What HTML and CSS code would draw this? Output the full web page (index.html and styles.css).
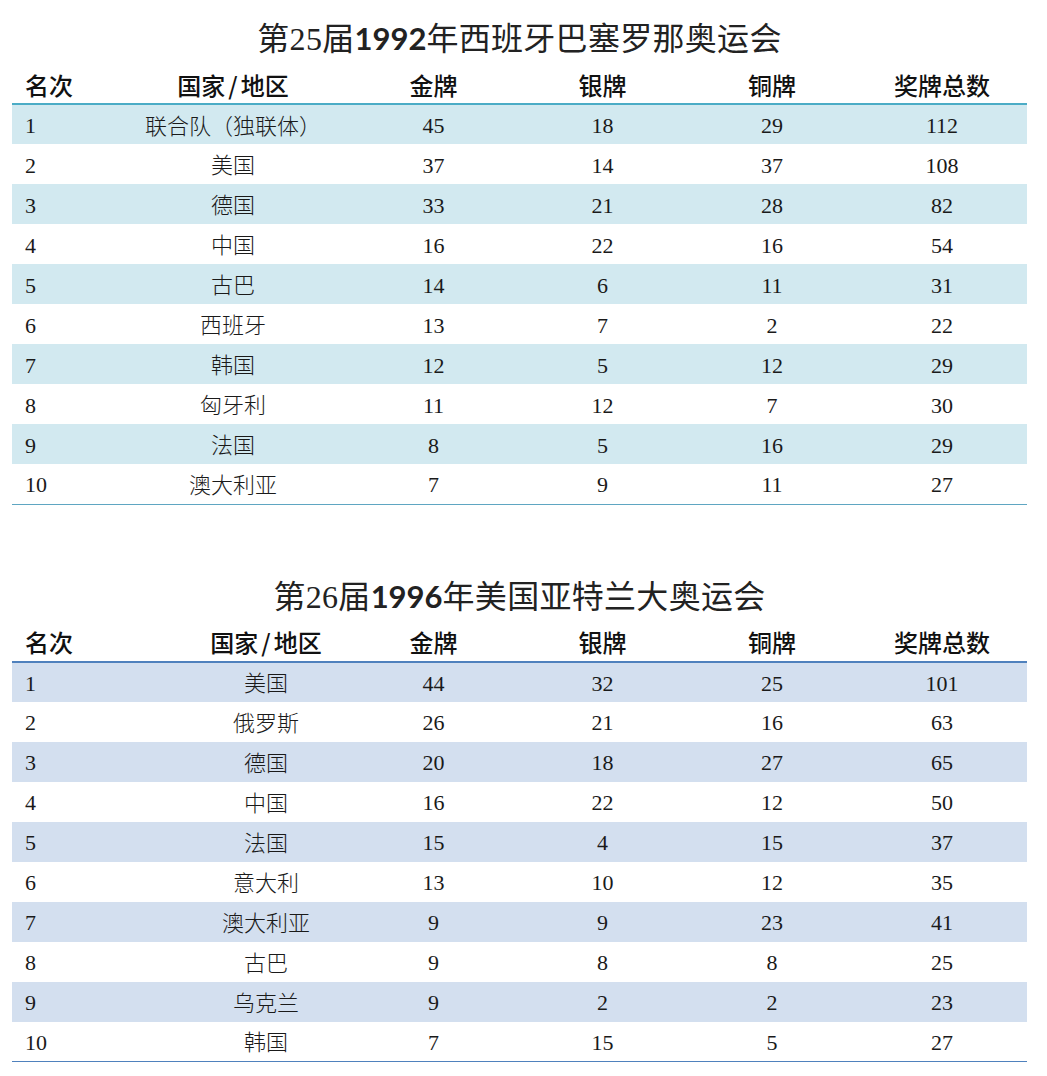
FILE: index.html
```html
<!DOCTYPE html>
<html lang="zh-CN">
<head>
<meta charset="utf-8">
<title>奥运会奖牌榜</title>
<link rel="stylesheet" href="styles.css">
</head>
<body>
<div class="page">
  <section class="block block-1992">
    <h2 class="title">第25届<b class="yr">1992</b>年西班牙巴塞罗那奥运会</h2>
    <table class="medals teal">
      <colgroup>
        <col class="c-rank-a"><col class="c-nation-a"><col class="c-num"><col class="c-num"><col class="c-num2"><col class="c-num2">
      </colgroup>
      <thead>
        <tr><th class="rank">名次</th><th>国家<span class="sl">/</span>地区</th><th>金牌</th><th>银牌</th><th>铜牌</th><th>奖牌总数</th></tr>
      </thead>
      <tbody>
        <tr><td class="rank">1</td><td class="name">联合队（独联体）</td><td>45</td><td>18</td><td>29</td><td>112</td></tr>
        <tr><td class="rank">2</td><td class="name">美国</td><td>37</td><td>14</td><td>37</td><td>108</td></tr>
        <tr><td class="rank">3</td><td class="name">德国</td><td>33</td><td>21</td><td>28</td><td>82</td></tr>
        <tr><td class="rank">4</td><td class="name">中国</td><td>16</td><td>22</td><td>16</td><td>54</td></tr>
        <tr><td class="rank">5</td><td class="name">古巴</td><td>14</td><td>6</td><td>11</td><td>31</td></tr>
        <tr><td class="rank">6</td><td class="name">西班牙</td><td>13</td><td>7</td><td>2</td><td>22</td></tr>
        <tr><td class="rank">7</td><td class="name">韩国</td><td>12</td><td>5</td><td>12</td><td>29</td></tr>
        <tr><td class="rank">8</td><td class="name">匈牙利</td><td>11</td><td>12</td><td>7</td><td>30</td></tr>
        <tr><td class="rank">9</td><td class="name">法国</td><td>8</td><td>5</td><td>16</td><td>29</td></tr>
        <tr><td class="rank">10</td><td class="name">澳大利亚</td><td>7</td><td>9</td><td>11</td><td>27</td></tr>
      </tbody>
    </table>
  </section>

  <section class="block block-1996">
    <h2 class="title">第26届<b class="yr">1996</b>年美国亚特兰大奥运会</h2>
    <table class="medals blue">
      <colgroup>
        <col class="c-rank-b"><col class="c-nation-b"><col class="c-num"><col class="c-num"><col class="c-num2"><col class="c-num2">
      </colgroup>
      <thead>
        <tr><th class="rank">名次</th><th>国家<span class="sl">/</span>地区</th><th>金牌</th><th>银牌</th><th>铜牌</th><th>奖牌总数</th></tr>
      </thead>
      <tbody>
        <tr><td class="rank">1</td><td class="name">美国</td><td>44</td><td>32</td><td>25</td><td>101</td></tr>
        <tr><td class="rank">2</td><td class="name">俄罗斯</td><td>26</td><td>21</td><td>16</td><td>63</td></tr>
        <tr><td class="rank">3</td><td class="name">德国</td><td>20</td><td>18</td><td>27</td><td>65</td></tr>
        <tr><td class="rank">4</td><td class="name">中国</td><td>16</td><td>22</td><td>12</td><td>50</td></tr>
        <tr><td class="rank">5</td><td class="name">法国</td><td>15</td><td>4</td><td>15</td><td>37</td></tr>
        <tr><td class="rank">6</td><td class="name">意大利</td><td>13</td><td>10</td><td>12</td><td>35</td></tr>
        <tr><td class="rank">7</td><td class="name">澳大利亚</td><td>9</td><td>9</td><td>23</td><td>41</td></tr>
        <tr><td class="rank">8</td><td class="name">古巴</td><td>9</td><td>8</td><td>8</td><td>25</td></tr>
        <tr><td class="rank">9</td><td class="name">乌克兰</td><td>9</td><td>2</td><td>2</td><td>23</td></tr>
        <tr><td class="rank">10</td><td class="name">韩国</td><td>7</td><td>15</td><td>5</td><td>27</td></tr>
      </tbody>
    </table>
  </section>
</div>
</body>
</html>
```

FILE: styles.css
```css
* { box-sizing: border-box; }

html, body {
  margin: 0;
  padding: 0;
  background: #ffffff;
}

body {
  font-family: "Liberation Serif", "Noto Sans CJK SC", serif;
  color: #111111;
}

.page {
  padding: 16px 20px 0 12px;
  width: 1047px;
}

.block-1996 {
  margin-top: 69px;
}

.title {
  margin: 0 0 5px 0;
  height: 44px;
  line-height: 44px;
  text-align: center;
  font-size: 32px;
  font-weight: 400;
  color: #222222;
  letter-spacing: 0.3px;
}

.title .yr {
  font-family: "Lato", "Open Sans", sans-serif;
  font-weight: 700;
  font-size: 31px;
  letter-spacing: 0;
}

.medals {
  width: 1015px;
  border-collapse: collapse;
  table-layout: fixed;
}

.c-rank-a { width: 105px; }
.c-nation-a { width: 232px; }
.c-rank-b { width: 171px; }
.c-nation-b { width: 166px; }
.c-num { width: 169px; }
.c-num2 { width: 170px; }

.medals th,
.medals td {
  padding: 0;
  text-align: center;
  white-space: nowrap;
}

.medals th {
  height: 39px;
  font-family: "Noto Sans CJK SC", sans-serif;
  font-size: 24px;
  font-weight: 500;
  color: #111111;
  vertical-align: middle;
}

.medals th .sl {
  padding: 0 3px;
}

.medals td {
  height: 40px;
  padding-top: 3px;
  font-size: 22px;
  font-weight: 300;
  color: #1a1a1a;
  vertical-align: middle;
}

.medals td.name {
  font-family: "Noto Sans CJK SC", sans-serif;
  padding-top: 0;
  padding-bottom: 2px;
}

.medals .rank {
  text-align: left;
  padding-left: 13px;
}

.medals thead tr {
  border-bottom: 2px solid #4bacc6;
}

.medals tbody tr:last-child {
  border-bottom: 1px solid #5fa6c2;
}

.teal tbody tr:nth-child(odd) td {
  background: #d2e9f0;
}

.blue thead tr {
  border-bottom-color: #4f81bd;
}

.blue tbody tr:last-child {
  border-bottom-color: #4f81bd;
}

.blue tbody tr:nth-child(odd) td {
  background: #d3dfef;
}
```
